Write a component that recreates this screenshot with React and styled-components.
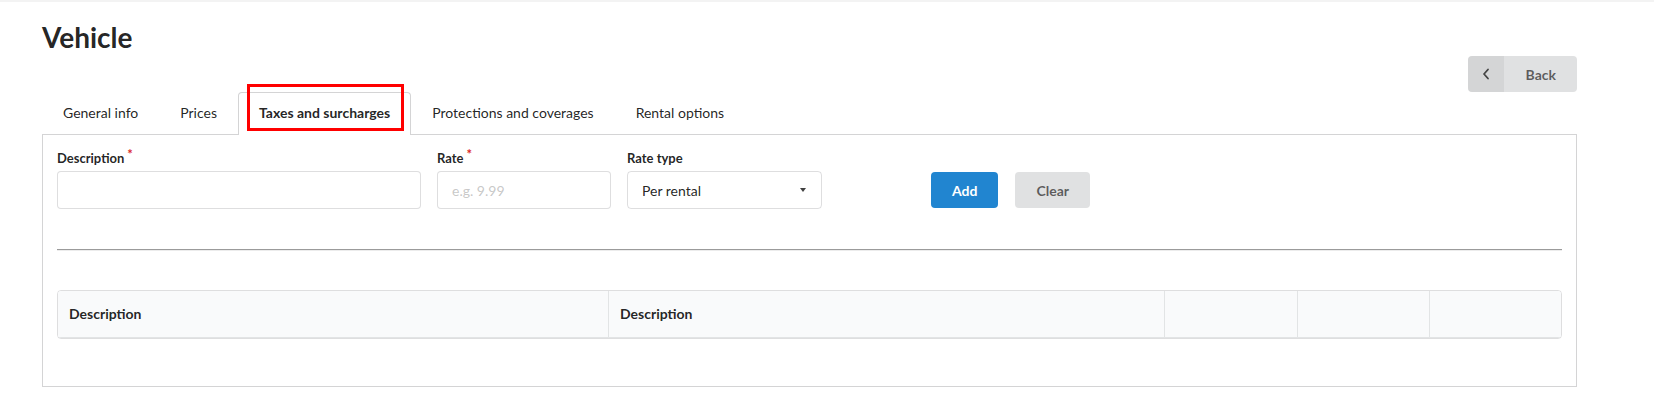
import styled, { createGlobalStyle } from "styled-components";

const GlobalStyle = createGlobalStyle`
  * { box-sizing: border-box; }
  body {
    margin: 0;
    background: #fff;
    font-family: Lato, "Open Sans", sans-serif;
    color: rgba(0, 0, 0, 0.87);
  }
`;

const tabs = [
  "General info",
  "Prices",
  "Taxes and surcharges",
  "Protections and coverages",
  "Rental options",
];

const columns = [
  { label: "Description", width: 550 },
  { label: "Description", width: 556 },
  { label: "", width: 133 },
  { label: "", width: 132 },
  { label: "" },
];

const App = () => {
  return (
    <Page>
      <GlobalStyle />
      <Content>
        <Title>Vehicle</Title>
        <ActionRow>
          <BackButton type="button">
            <BackIcon>
              <svg width="8" height="12" viewBox="0 0 8 12">
                <polyline
                  points="6,1.5 2,6 6,10.5"
                  fill="none"
                  stroke="#444"
                  strokeWidth="1.8"
                  strokeLinecap="round"
                  strokeLinejoin="round"
                />
              </svg>
            </BackIcon>
            <BackLabel>Back</BackLabel>
          </BackButton>
        </ActionRow>

        <TabBar>
          {tabs.map((t, i) => (
            <Tab key={t} $active={i === 2}>
              {t}
              {i === 2 && <Highlight />}
            </Tab>
          ))}
        </TabBar>

        <Panel>
          <FormRow>
            <Field $width={364}>
              <Label $required>Description</Label>
              <Input />
            </Field>
            <Field $width={174}>
              <Label $required>Rate</Label>
              <Input placeholder="e.g. 9.99" />
            </Field>
            <Field $width={195}>
              <Label>Rate type</Label>
              <Select>
                <span>Per rental</span>
                <Caret />
              </Select>
            </Field>
            <Buttons>
              <Button $primary type="button">Add</Button>
              <Button type="button">Clear</Button>
            </Buttons>
          </FormRow>

          <Divider />

          <Table>
            <colgroup>
              {columns.map((c, i) => (
                <col key={i} style={c.width ? { width: c.width } : undefined} />
              ))}
            </colgroup>
            <thead>
              <tr>
                {columns.map((c, i) => (
                  <Th key={i}>{c.label}</Th>
                ))}
              </tr>
            </thead>
            <tbody />
          </Table>
        </Panel>
      </Content>
    </Page>
  );
};

const Page = styled.div`
  border-top: 2px solid #f3f3f3;
  padding: 17px 0 0 42px;
`;

const Content = styled.div`
  width: 1535px;
`;

const Title = styled.h1`
  margin: 0;
  font-size: 28px;
  line-height: 36px;
  font-weight: 700;
  color: rgba(0, 0, 0, 0.87);
`;

const ActionRow = styled.div`
  display: flex;
  justify-content: flex-end;
  margin-top: 1px;
`;

const BackButton = styled.button`
  display: flex;
  align-items: stretch;
  height: 36px;
  padding: 0;
  border: 0;
  border-radius: 4px;
  overflow: hidden;
  background: #e0e1e2;
  color: rgba(0, 0, 0, 0.6);
  font-family: Lato, sans-serif;
  font-size: 14px;
  font-weight: 700;
  cursor: pointer;
`;

const BackIcon = styled.span`
  width: 36px;
  display: flex;
  align-items: center;
  justify-content: center;
  background: rgba(0, 0, 0, 0.05);
`;

const BackLabel = styled.span`
  display: flex;
  align-items: center;
  padding: 0 21px 0 22px;
`;

const TabBar = styled.div`
  display: flex;
  border-bottom: 1px solid #d4d4d5;
`;

const Tab = styled.div`
  position: relative;
  padding: 13px 20px 15px;
  margin-bottom: -1px;
  font-size: 14px;
  line-height: 14px;
  border: 1px solid transparent;
  border-bottom: none;
  border-radius: 4px 4px 0 0;
  color: rgba(0, 0, 0, 0.87);
  font-weight: ${(p) => (p.$active ? 700 : 400)};
  background: ${(p) => (p.$active ? "#fff" : "transparent")};
  border-color: ${(p) => (p.$active ? "#d4d4d5" : "transparent")};
`;

const Highlight = styled.span`
  position: absolute;
  left: 8px;
  top: -9px;
  width: 157px;
  height: 47px;
  border: 3px solid #ff0000;
  pointer-events: none;
`;

const Panel = styled.div`
  border: 1px solid #d4d4d5;
  border-top: none;
  padding: 15px 14px 47px 14px;
`;

const FormRow = styled.div`
  display: flex;
  align-items: flex-end;
  gap: 16px;
`;

const Field = styled.div`
  display: flex;
  flex-direction: column;
  width: ${(p) => p.$width}px;
`;

const Label = styled.label`
  font-size: 13px;
  line-height: 17px;
  font-weight: 700;
  margin-bottom: 4px;
  color: rgba(0, 0, 0, 0.87);

  &::after {
    content: ${(p) => (p.$required ? '"*"' : "none")};
    color: #db2828;
    margin-left: 3px;
    font-size: 13px;
    position: relative;
    top: -4px;
  }
`;

const Input = styled.input`
  height: 38px;
  width: 100%;
  padding: 0 14px;
  border: 1px solid rgba(34, 36, 38, 0.15);
  border-radius: 4px;
  font-family: Lato, sans-serif;
  font-size: 14px;
  color: rgba(0, 0, 0, 0.87);
  outline: none;

  &::placeholder {
    color: rgba(191, 191, 191, 0.87);
  }
`;

const Select = styled.div`
  height: 38px;
  display: flex;
  align-items: center;
  justify-content: space-between;
  padding: 0 15px 0 14px;
  border: 1px solid rgba(34, 36, 38, 0.15);
  border-radius: 4px;
  font-size: 14px;
  color: rgba(0, 0, 0, 0.87);
`;

const Caret = styled.span`
  width: 0;
  height: 0;
  border-left: 3.5px solid transparent;
  border-right: 3.5px solid transparent;
  border-top: 4px solid rgba(0, 0, 0, 0.75);
`;

const Buttons = styled.div`
  display: flex;
  gap: 17px;
  margin-left: 93px;
  margin-bottom: 1px;
`;

const Button = styled.button`
  height: 36px;
  padding: 0 21px;
  border: 0;
  border-radius: 4px;
  font-family: Lato, sans-serif;
  font-size: 14px;
  font-weight: 700;
  cursor: pointer;
  background: ${(p) => (p.$primary ? "#2185d0" : "#e0e1e2")};
  color: ${(p) => (p.$primary ? "#fff" : "rgba(0, 0, 0, 0.6)")};
`;

const Divider = styled.hr`
  margin: 40px 0 39px;
  border: 0;
  border-top: 1px solid #9b9b9b;
  border-bottom: 1px solid #ececec;
`;

const Table = styled.table`
  width: 100%;
  table-layout: fixed;
  border-collapse: separate;
  border-spacing: 0;
  border: 1px solid rgba(34, 36, 38, 0.15);
  border-radius: 4px;
  overflow: hidden;
`;

const Th = styled.th`
  background: #f9fafb;
  text-align: left;
  padding: 13px 11px;
  font-size: 14px;
  line-height: 20px;
  font-weight: 700;
  color: rgba(0, 0, 0, 0.87);
  border-bottom: 1px solid rgba(34, 36, 38, 0.1);

  & + & {
    border-left: 1px solid rgba(34, 36, 38, 0.1);
  }
`;

export default App;
